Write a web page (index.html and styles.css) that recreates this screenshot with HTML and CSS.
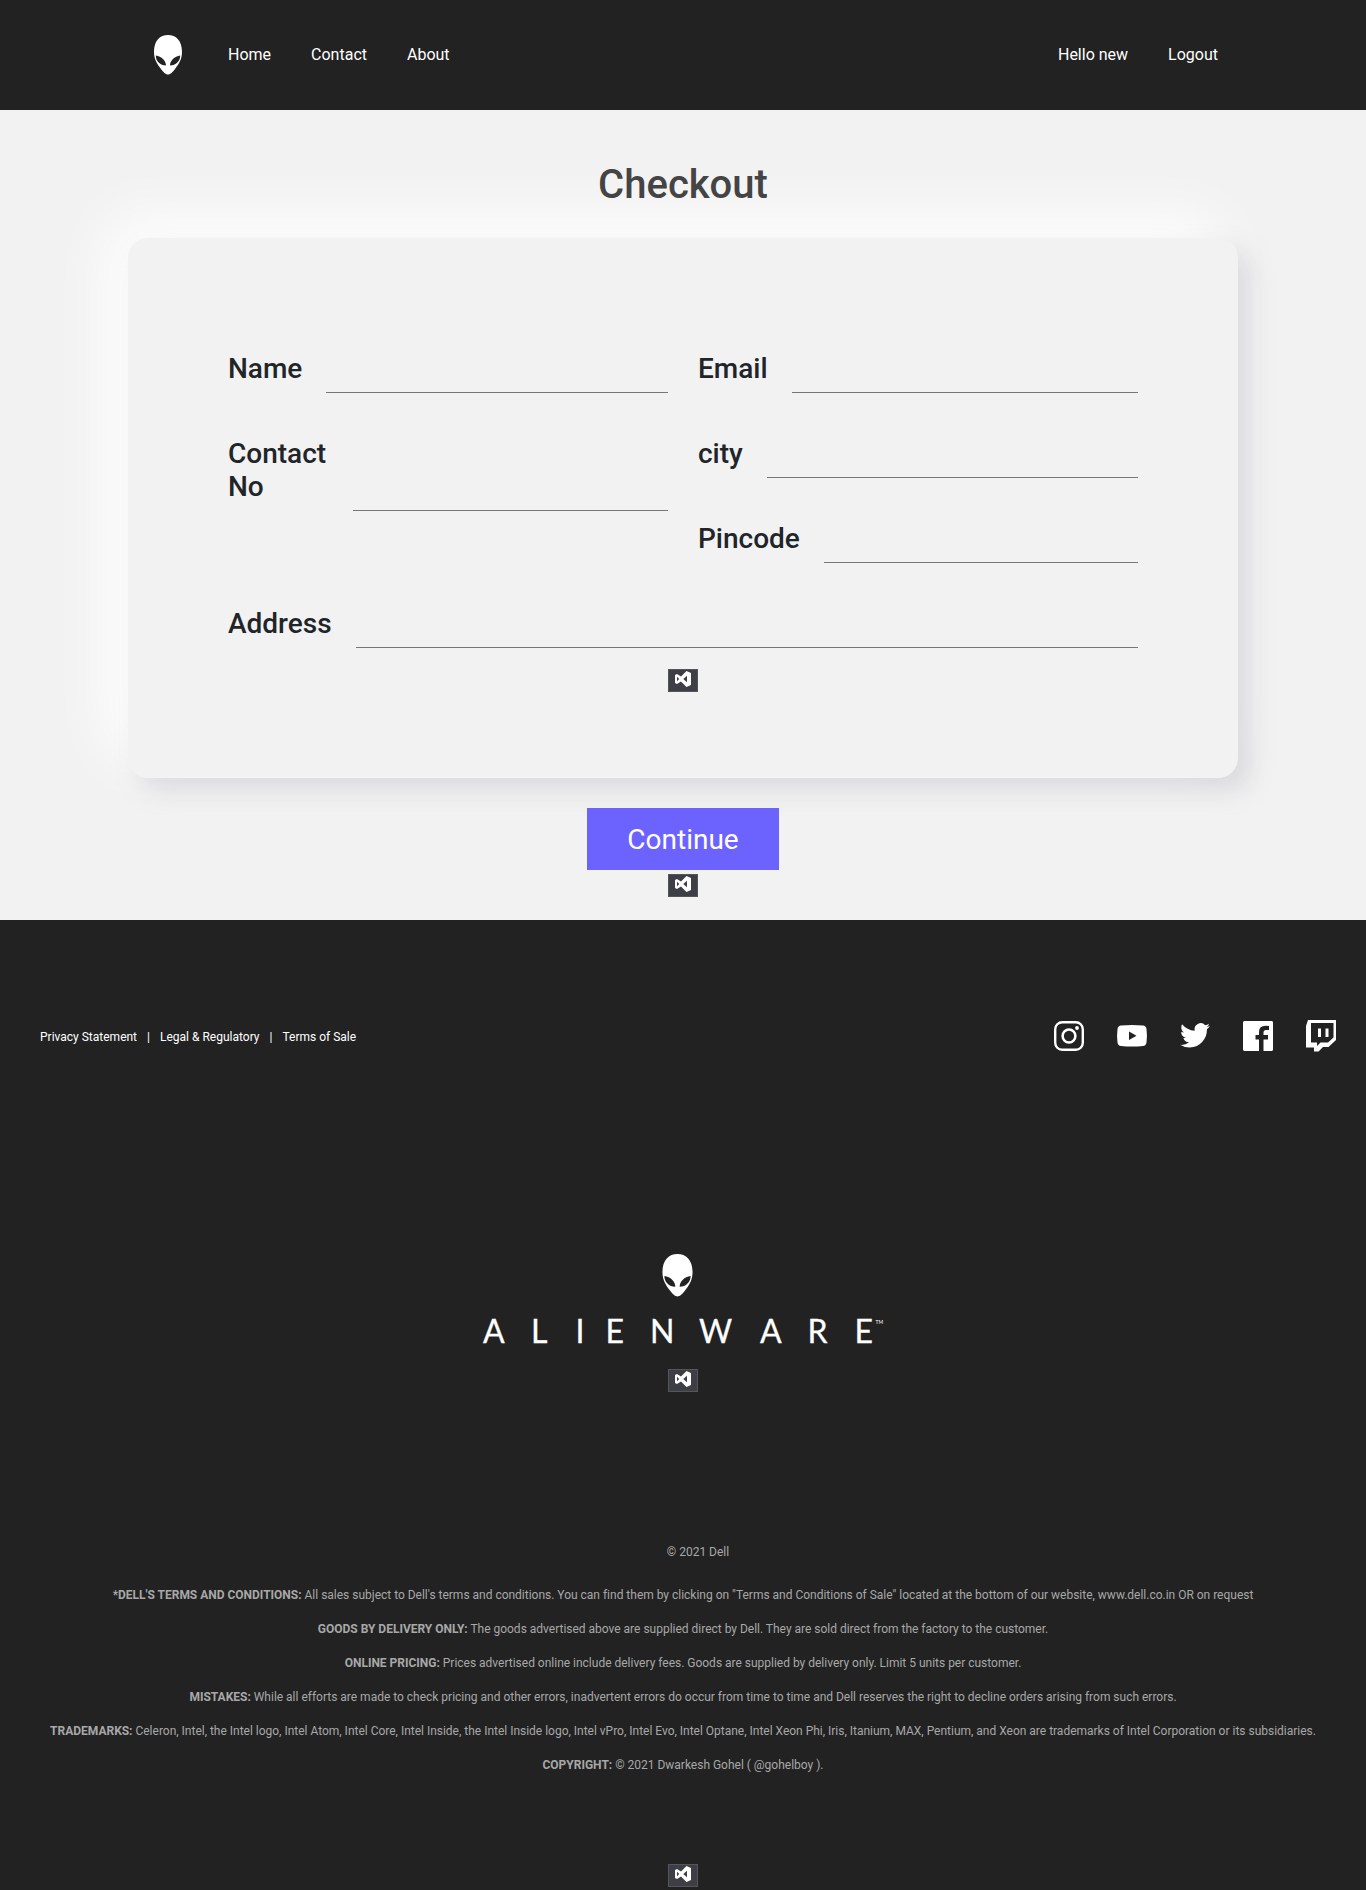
FILE: index.html
```html
<!DOCTYPE html>
<html lang="en">
<head>
<meta charset="utf-8">
<title>Checkout</title>
<link rel="stylesheet" href="styles.css">
</head>
<body>
<svg class="defs" aria-hidden="true">
  <symbol id="alien" viewBox="0 0 28 40">
    <path fill-rule="evenodd" d="M14 0C22 0 28 5.500 28 17C28 24 25 29 21 34C18 38 16 39.500 14 39.500C12 39.500 10 38 7 34C3 29 0 24 0 17C0 5.500 6 0 14 0ZM1.800 20.500C1.800 26 6 30.500 12 30.500C12 26 7.500 21 1.800 20.500ZM26.200 20.500C20.500 21 16 26 16 30.500C22 30.500 26.200 26 26.200 20.500Z"/>
  </symbol>
  <symbol id="vs" viewBox="0 0 16 16">
    <path fill-rule="evenodd" d="M11.500 0L16 2V14L11.500 16L6 10.500L2 13L0 12V4L2 3L6 5.500ZM12 4.700L8.300 8L12 11.300ZM2 5.800V10.200L4.200 8Z"/>
  </symbol>
</svg>

<header class="header">
  <nav class="nav">
    <a class="brand"><svg class="brand-icon"><use href="#alien"/></svg></a>
    <a class="nav-link">Home</a>
    <a class="nav-link">Contact</a>
    <a class="nav-link">About</a>
    <a class="nav-link nav-user">Hello new</a>
    <a class="nav-link">Logout</a>
  </nav>
</header>

<main class="checkout">
  <h1 class="title">Checkout</h1>
  <form class="card">
    <div class="columns">
      <div class="column">
        <div class="field"><label class="label">Name</label><input class="input"></div>
        <div class="field"><label class="label label-contact">Contact No</label><input class="input"></div>
      </div>
      <div class="column">
        <div class="field"><label class="label">Email</label><input class="input"></div>
        <div class="field"><label class="label">city</label><input class="input"></div>
        <div class="field"><label class="label">Pincode</label><input class="input"></div>
      </div>
    </div>
    <div class="field"><label class="label">Address</label><input class="input"></div>
    <span class="badge badge-form"><svg class="badge-icon"><use href="#vs"/></svg></span>
  </form>
  <button class="continue">Continue</button>
  <span class="badge badge-main"><svg class="badge-icon"><use href="#vs"/></svg></span>
</main>

<footer class="footer">
  <div class="footer-top">
    <div class="links"><a>Privacy Statement</a><span>|</span><a>Legal &amp; Regulatory</a><span>|</span><a>Terms of Sale</a></div>
    <div class="social">
      <svg class="social-icon" viewBox="0 0 30 30"><rect x="1.200" y="1.200" width="27.600" height="27.600" rx="7" fill="none" stroke="#fff" stroke-width="2.400"/><circle cx="15" cy="15" r="6.400" fill="none" stroke="#fff" stroke-width="2.500"/><circle cx="23" cy="7" r="1.900"/></svg>
      <svg class="social-icon" viewBox="0 0 30 30"><path fill-rule="evenodd" d="M4 4.600Q15 3.600 26 4.600Q29 4.800 29.500 8Q30.400 15 29.500 21.500Q29 24.800 26 25Q15 26 4 25Q1 24.800 .500 21.500Q-.400 15 .500 8Q1 4.800 4 4.600ZM12 10.500V19L19.500 14.800Z"/></svg>
      <svg class="social-icon" viewBox="0 0 24 24"><path d="M23.950 4.070a10 10 0 0 1-2.820.780 4.960 4.960 0 0 0 2.160-2.730 9.900 9.900 0 0 1-3.130 1.190A4.920 4.920 0 0 0 11.780 7.800 13.980 13.980 0 0 1 1.640 2.660a4.920 4.920 0 0 0 1.520 6.570 4.900 4.900 0 0 1-2.230-.610v.060a4.920 4.920 0 0 0 3.950 4.830 5 5 0 0 1-2.210.080 4.940 4.940 0 0 0 4.600 3.420A9.870 9.870 0 0 1 0 19.040a13.940 13.940 0 0 0 7.550 2.210c9.050 0 14-7.500 14-13.980 0-.210 0-.420-.020-.630a9.940 9.940 0 0 0 2.420-2.570Z"/></svg>
      <svg class="social-icon" viewBox="0 0 30 30"><path d="M1 0H29L30 1V29L29 30H20.500V18.500H25V14H20.500V11.500Q20.500 9 23 9H26V5Q24.500 4.800 22.500 4.800Q16 4.800 16 11V14H12.500V18.500H16V30H1L0 29V1Z"/></svg>
      <svg class="social-icon" viewBox="0 0 30 30"><path fill-rule="evenodd" d="M2 -1H30V19L22.500 26H17L12.500 30.500H8V26.500H0V5ZM5 2V21.500H11V25L14.500 21.500H22L27.500 16.500V2ZM12 7.500H15V16H12ZM19.500 7.500H22.500V16H19.500Z"/></svg>
    </div>
  </div>
  <div class="logo">
    <svg class="logo-icon"><use href="#alien"/></svg>
    <svg class="wordmark" viewBox="0 0 402 26"><text class="word" y="24" x="1 49 93.500 123.500 168 217 278 325.500 372.500">ALIENWARE</text><text class="tm" x="393.500" y="4.500">TM</text></svg>
  </div>
  <span class="badge badge-logo"><svg class="badge-icon"><use href="#vs"/></svg></span>
  <div class="legal">
    <p class="copyright">© 2021 Dell</p>
    <p><b>*DELL'S TERMS AND CONDITIONS:</b> All sales subject to Dell's terms and conditions. You can find them by clicking on "Terms and Conditions of Sale" located at the bottom of our website, www.dell.co.in OR on request</p>
    <p><b>GOODS BY DELIVERY ONLY:</b> The goods advertised above are supplied direct by Dell. They are sold direct from the factory to the customer.</p>
    <p><b>ONLINE PRICING:</b> Prices advertised online include delivery fees. Goods are supplied by delivery only. Limit 5 units per customer.</p>
    <p><b>MISTAKES:</b> While all efforts are made to check pricing and other errors, inadvertent errors do occur from time to time and Dell reserves the right to decline orders arising from such errors.</p>
    <p><b>TRADEMARKS:</b> Celeron, Intel, the Intel logo, Intel Atom, Intel Core, Intel Inside, the Intel Inside logo, Intel vPro, Intel Evo, Intel Optane, Intel Xeon Phi, Iris, Itanium, MAX, Pentium, and Xeon are trademarks of Intel Corporation or its subsidiaries.</p>
    <p><b>COPYRIGHT:</b> © 2021 Dwarkesh Gohel ( @gohelboy ).</p>
  </div>
  <span class="badge badge-end"><svg class="badge-icon"><use href="#vs"/></svg></span>
</footer>
</body>
</html>
```
FILE: styles.css
```css
* { box-sizing: border-box; }
body { margin: 0; background: #f2f2f2; color: #212529; font: 16px/24px Roboto, sans-serif; }
svg { display: block; fill: #fff; }
.defs { position: absolute; width: 0; height: 0; }

.header { height: 110px; background: #222; }
.nav { width: 1110px; height: 110px; margin: 0 auto; padding: 0 20px 0 26px; display: flex; align-items: center; gap: 40px; color: #fff; }
.brand { margin-right: 6px; }
.brand-icon { width: 28px; height: 40px; }
.nav-user { margin-left: auto; }

.checkout { height: 810px; padding-top: 51px; display: flex; flex-direction: column; align-items: center; }
/* keeps the heading above the card's white glow */
.title { z-index: 1; margin: 0 0 29px; color: #444; font-size: 40px; line-height: 48px; font-weight: 500; }
.card { width: 1110px; height: 540px; padding: 113px 100px 0; border-radius: 20px; background: #f2f2f2; box-shadow: 12px 12px 24px 0 rgba(160, 160, 172, .29), -20px -20px 60px 0 #fff; display: flex; flex-direction: column; }
.columns { display: grid; grid-template-columns: 440px 440px; gap: 30px; }
.field { display: flex; align-items: flex-start; min-height: 42px; margin-bottom: 43px; }
.label { margin-right: 24px; padding-top: .5px; font-size: 28px; line-height: 33.6px; font-weight: 500; }
.label-contact { width: 101px; }
.input { flex: 1; min-width: 0; height: 42px; align-self: flex-end; padding: 0; border: 0; border-bottom: 1px solid #777; background: transparent; }
.label-contact + .input { margin-top: 33px; }
.card > .field { margin-bottom: 21px; }
.continue { width: 192px; height: 62px; margin-top: 30px; border: 0; padding: 2px 0 0; background: #6c63ff; color: #fff; font: 28px/60px Roboto, sans-serif; }

.badge { width: 30px; height: 23px; flex: none; display: flex; justify-content: center; padding-top: 1px; border: 1px solid #555; background: #3e3e46; }
.badge-icon { width: 16px; height: 16px; }
.badge-form { align-self: center; }
.badge-main { margin-top: 4px; }

.footer { height: 970px; background: #222; display: flex; flex-direction: column; align-items: center; }
.footer-top { width: 100%; padding: 101px 30px 0 40px; display: flex; justify-content: space-between; align-items: center; color: #fff; }
.links { display: flex; gap: 10px; padding-top: 2px; font-size: 12px; line-height: 18px; }
.social { display: flex; gap: 33px; }
.social-icon { width: 30px; height: 30px; overflow: visible; }
.logo { width: 402px; margin-top: 203px; }
.logo-icon { width: 31px; height: 43px; margin: 0 0 22px 180px; }
.wordmark { width: 402px; height: 26px; overflow: visible; }
.word { font: 32px Lato, sans-serif; stroke: #fff; stroke-width: .3px; }
.tm { font: 5px Lato, sans-serif; }
.badge-logo { margin-top: 24px; }
.legal { margin-top: 151px; color: #a8a8a8; font-size: 12px; line-height: 18px; letter-spacing: -.01px; text-align: center; white-space: nowrap; }
.legal p { margin: 0 0 16px; }
.legal .copyright { margin: 0 0 25px 30px; }
.badge-end { margin-top: 74px; }
```
